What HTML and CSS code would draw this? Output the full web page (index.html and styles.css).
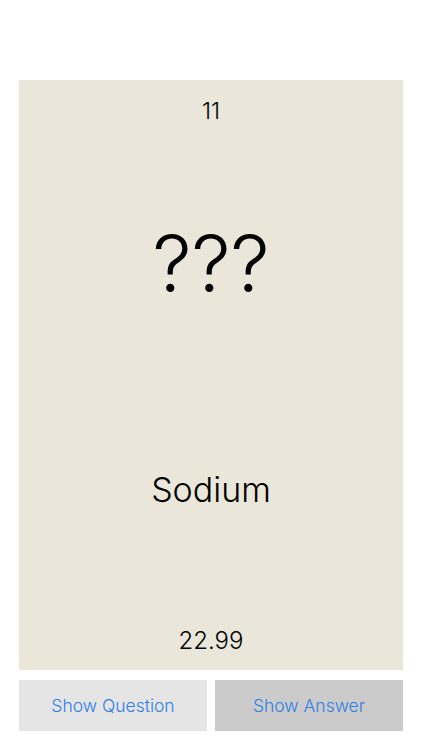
FILE: index.html
```html
<!DOCTYPE html>
<html lang="en">

<head>
    <meta charset="UTF-8">
    <title>Flashcard</title>
    <link rel="stylesheet" href="styles.css">
</head>

<body>
    <div class="screen">
        <div class="card">
            <div class="num">11</div>
            <div class="symbol">???</div>
            <div class="name">Sodium</div>
            <div class="mass">22.99</div>
        </div>
        <div class="buttons">
            <div class="btn btn-question">Show Question</div>
            <div class="btn btn-answer">Show Answer</div>
        </div>
    </div>
</body>

</html>
```

FILE: styles.css
```css
* {
    box-sizing: border-box;
}

body {
    margin: 0;
    background: #fff;
    font-family: Inter, "Liberation Sans", Arial, sans-serif;
    font-weight: 300;
    color: #000;
}

.screen {
    width: 422px;
    padding: 80px 19px 0 19px;
}

.card {
    height: 590px;
    background: #eae7da;
    display: flex;
    flex-direction: column;
    align-items: center;
    text-align: center;
}

.num {
    padding-top: 16px;
    line-height: 30px;
    font-size: 23px;
}

.symbol {
    margin-top: 93px;
    line-height: 90px;
    font-size: 78px;
}

.name {
    margin-top: 161px;
    line-height: 40px;
    font-size: 34px;
}

.mass {
    margin-top: auto;
    margin-bottom: 14px;
    line-height: 30px;
    font-size: 24px;
}

.buttons {
    display: flex;
    gap: 8px;
    margin-top: 10px;
}

.btn {
    flex: 1;
    height: 51px;
    line-height: 52px;
    text-align: center;
    font-size: 17.5px;
    color: #2f80e3;
}

.btn-question {
    background: #e5e5e5;
}

.btn-answer {
    background: #cbcbcb;
}
```
